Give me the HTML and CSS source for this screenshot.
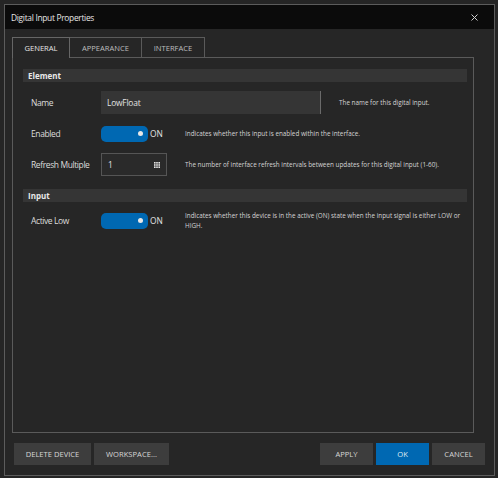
FILE: index.html
```html
<!DOCTYPE html>
<html lang="en">
  <head>
    <meta charset="UTF-8" />
    <title>Digital Input Properties</title>
    <link rel="stylesheet" href="styles.css">
  </head>
  <body>
    <div class="dialog">
      <div class="titlebar">
        <span class="title">Digital Input Properties</span>
        <svg class="close" width="7" height="7" viewBox="0 0 7 7">
          <path d="M0.5 0.5 L6.5 6.5 M6.5 0.5 L0.5 6.5" stroke="#cfcfcf" stroke-width="1" />
        </svg>
      </div>
      <div class="content">
        <div class="tabs">
          <div class="tab active">GENERAL</div>
          <div class="tab">APPEARANCE</div>
          <div class="tab">INTERFACE</div>
        </div>
        <div class="panel">
          <div class="section">Element</div>
          <div class="row first">
            <div class="label">Name</div>
            <div class="text-input">LowFloat</div>
            <div class="desc">The name for this digital input.</div>
          </div>
          <div class="row">
            <div class="label">Enabled</div>
            <div class="control">
              <div class="toggle"><span class="knob"></span></div>
              <span class="toggle-text">ON</span>
            </div>
            <div class="desc">Indicates whether this input is enabled within the interface.</div>
          </div>
          <div class="row">
            <div class="label">Refresh Multiple</div>
            <div class="control">
              <div class="num-input">
                <span>1</span>
                <svg width="6" height="6" viewBox="0 0 6 6">
                  <rect x="0" y="0" width="1.6" height="1.6" fill="#e6e6e6" />
                  <rect x="2.2" y="0" width="1.6" height="1.6" fill="#e6e6e6" />
                  <rect x="4.4" y="0" width="1.6" height="1.6" fill="#e6e6e6" />
                  <rect x="0" y="2.2" width="1.6" height="1.6" fill="#e6e6e6" />
                  <rect x="2.2" y="2.2" width="1.6" height="1.6" fill="#e6e6e6" />
                  <rect x="4.4" y="2.2" width="1.6" height="1.6" fill="#e6e6e6" />
                  <rect x="0" y="4.4" width="1.6" height="1.6" fill="#e6e6e6" />
                  <rect x="2.2" y="4.4" width="1.6" height="1.6" fill="#e6e6e6" />
                  <rect x="4.4" y="4.4" width="1.6" height="1.6" fill="#e6e6e6" />
                </svg>
              </div>
            </div>
            <div class="desc">The number of interface refresh intervals between updates for this digital input (1-60).</div>
          </div>
          <div class="section second">Input</div>
          <div class="row tall">
            <div class="label">Active Low</div>
            <div class="control">
              <div class="toggle"><span class="knob"></span></div>
              <span class="toggle-text">ON</span>
            </div>
            <div class="desc wrap">Indicates whether this device is in the active (ON) state when the input signal is either LOW or HIGH.</div>
          </div>
        </div>
        <div class="buttons">
          <div class="btn wide">DELETE DEVICE</div>
          <div class="btn">WORKSPACE...</div>
          <div class="spacer"></div>
          <div class="btn small">APPLY</div>
          <div class="btn small primary">OK</div>
          <div class="btn small">CANCEL</div>
        </div>
      </div>
    </div>
  </body>
</html>
```

FILE: styles.css
```css
body {
  margin: 0;
  width: 498px;
  height: 478px;
  background: #252525;
  font-family: "Open Sans", "Noto Sans", sans-serif;
  color: #e2e2e2;
  padding: 4px 0 0 4px;
  box-sizing: border-box;
}
.dialog {
  width: 491px;
  height: 472px;
  box-sizing: border-box;
  border: 1px solid #5c5c5c;
  background: #262626;
  display: flex;
  flex-direction: column;
}
.titlebar {
  height: 25px;
  background: #0b0b0b;
  display: flex;
  align-items: center;
  padding: 0 16px 0 6px;
}
.title {
  font-size: 8.4px;
  letter-spacing: -0.3px;
  color: #e6e6e6;
  flex: 1;
}
.close {
  display: block;
}
.content {
  flex: 1;
  display: flex;
  flex-direction: column;
  padding: 8px 9px 10px 7px;
}
.tabs {
  display: flex;
  height: 20px;
}
.tab {
  box-sizing: border-box;
  height: 20px;
  border: 1px solid #5a5a5a;
  border-bottom: none;
  margin-left: -1px;
  font-size: 7.6px;
  color: #bdbdbd;
  display: flex;
  align-items: center;
  justify-content: center;
  width: 73px;
}
.tab:first-child {
  margin-left: 0;
  width: 58px;
}
.tab:last-child {
  width: 64px;
}
.tab.active {
  color: #e6e6e6;
  border-color: #666;
  background: #262626;
  position: relative;
  z-index: 1;
  height: 21px;
}
.panel {
  width: 462px;
  height: 376px;
  box-sizing: border-box;
  border: 1px solid #5a5a5a;
  padding: 11px 6px 0 10px;
}
.section {
  height: 13px;
  background: #353535;
  font-size: 8px;
  font-weight: bold;
  padding-left: 5px;
  display: flex;
  align-items: center;
  color: #e8e8e8;
}
.section.second {
  margin-top: 13px;
}
.row {
  display: flex;
  align-items: center;
  height: 23px;
  margin-top: 8px;
  padding-left: 8px;
}
.row.first {
  margin-top: 9px;
}
.row.tall {
  margin-top: 7px;
}
.label {
  width: 70px;
  font-size: 8.5px;
  letter-spacing: -0.4px;
  color: #dcdcdc;
}
.text-input {
  box-sizing: border-box;
  width: 220px;
  height: 23px;
  background: #353535;
  border-right: 1px solid #6a6a6a;
  font-size: 8.4px;
  letter-spacing: -0.2px;
  padding-left: 6px;
  display: flex;
  align-items: center;
  margin-right: 18px;
}
.control {
  width: 84px;
  display: flex;
  align-items: center;
}
.toggle {
  width: 47px;
  height: 16px;
  border-radius: 5px;
  background: #0068b2;
  display: flex;
  align-items: center;
  justify-content: flex-end;
  padding-right: 5px;
  box-sizing: border-box;
}
.knob {
  width: 5px;
  height: 5px;
  border-radius: 50%;
  background: #e8e8e8;
}
.toggle-text {
  font-size: 8.4px;
  margin-left: 2px;
}
.num-input {
  box-sizing: border-box;
  width: 66px;
  height: 23px;
  border: 1px solid #555;
  background: #2a2a2a;
  display: flex;
  align-items: center;
  justify-content: space-between;
  padding: 0 6px 0 6px;
  font-size: 8.4px;
}
.num-input svg {
  display: block;
}
.desc {
  font-size: 6.35px;
  color: #d4d4d4;
}
.desc.wrap {
  width: 282px;
  line-height: 10px;
}
.buttons {
  display: flex;
  margin-top: 10px;
  padding-left: 2px;
  gap: 3px;
}
.spacer {
  flex: 1;
}
.btn {
  height: 22px;
  width: 75px;
  background: #3d3d3d;
  font-size: 7.6px;
  color: #d6d6d6;
  display: flex;
  align-items: center;
  justify-content: center;
}
.btn.wide {
  width: 77px;
}
.btn.small {
  width: 53px;
}
.btn.primary {
  background: #0068b2;
  color: #dfe8f0;
}
```
